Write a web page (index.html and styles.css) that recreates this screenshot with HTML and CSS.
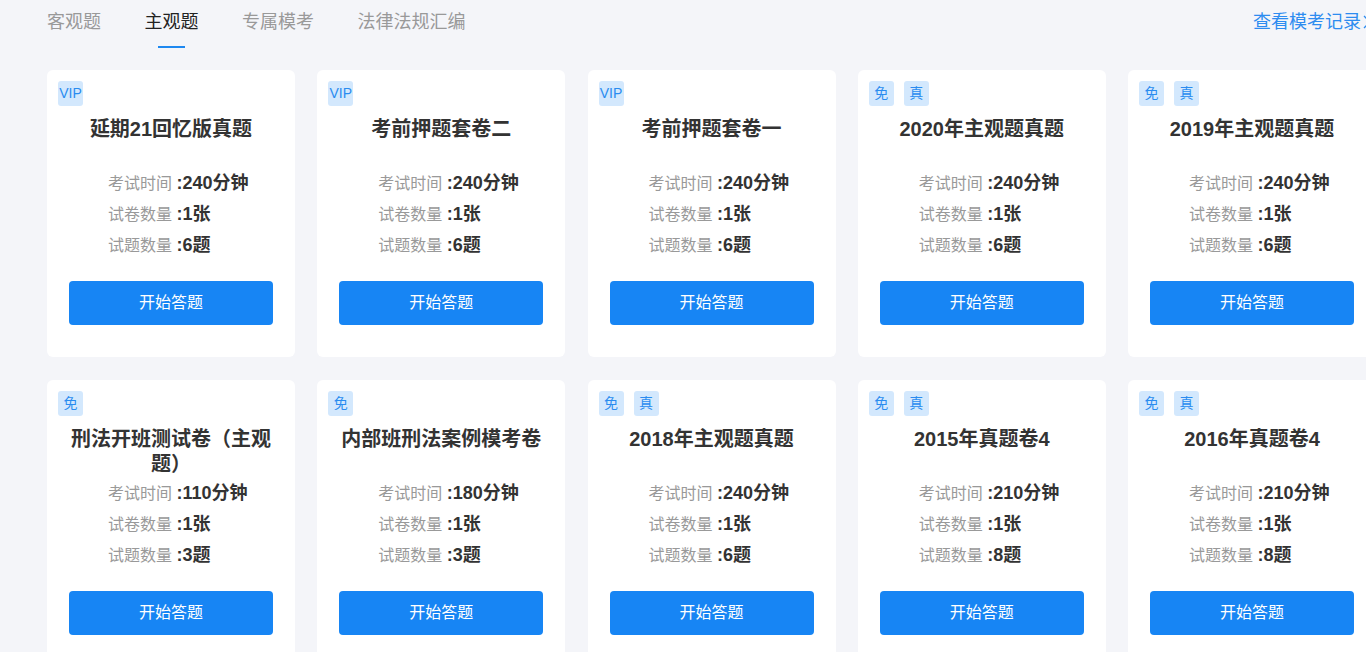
FILE: index.html
```html
<!DOCTYPE html>
<html lang="zh-CN">
<head>
    <meta charset="UTF-8">
    <meta name="viewport" content="width=device-width, initial-scale=1.0">
    <title>主观题模考</title>
    <link rel="stylesheet" href="styles.css">
</head>
<body>
    <div class="page">
        <!-- Tabs -->
        <div class="header">
            <div class="tabs">
                <div class="tab">客观题<span class="tab-line"></span></div>
                <div class="tab active">主观题<span class="tab-line"></span></div>
                <div class="tab">专属模考<span class="tab-line"></span></div>
                <div class="tab">法律法规汇编<span class="tab-line"></span></div>
            </div>
            <a class="record-link" href="#">查看模考记录<svg class="chevron" width="8" height="14" viewBox="0 0 8 14"><path d="M1 1 L7 7 L1 13" fill="none" stroke="currentColor" stroke-width="1.3"/></svg></a>
        </div>

        <!-- Exam cards -->
        <div class="card-grid">
            <div class="card">
                <div class="tags"><span class="tag">VIP</span></div>
                <div class="card-title">延期21回忆版真题</div>
                <div class="info">
                    <div class="info-row"><span class="label">考试时间</span> <b>:240分钟</b></div>
                    <div class="info-row"><span class="label">试卷数量</span> <b>:1张</b></div>
                    <div class="info-row"><span class="label">试题数量</span> <b>:6题</b></div>
                </div>
                <button class="start-btn">开始答题</button>
            </div>
            <div class="card">
                <div class="tags"><span class="tag">VIP</span></div>
                <div class="card-title">考前押题套卷二</div>
                <div class="info">
                    <div class="info-row"><span class="label">考试时间</span> <b>:240分钟</b></div>
                    <div class="info-row"><span class="label">试卷数量</span> <b>:1张</b></div>
                    <div class="info-row"><span class="label">试题数量</span> <b>:6题</b></div>
                </div>
                <button class="start-btn">开始答题</button>
            </div>
            <div class="card">
                <div class="tags"><span class="tag">VIP</span></div>
                <div class="card-title">考前押题套卷一</div>
                <div class="info">
                    <div class="info-row"><span class="label">考试时间</span> <b>:240分钟</b></div>
                    <div class="info-row"><span class="label">试卷数量</span> <b>:1张</b></div>
                    <div class="info-row"><span class="label">试题数量</span> <b>:6题</b></div>
                </div>
                <button class="start-btn">开始答题</button>
            </div>
            <div class="card">
                <div class="tags"><span class="tag">免</span><span class="tag">真</span></div>
                <div class="card-title">2020年主观题真题</div>
                <div class="info">
                    <div class="info-row"><span class="label">考试时间</span> <b>:240分钟</b></div>
                    <div class="info-row"><span class="label">试卷数量</span> <b>:1张</b></div>
                    <div class="info-row"><span class="label">试题数量</span> <b>:6题</b></div>
                </div>
                <button class="start-btn">开始答题</button>
            </div>
            <div class="card">
                <div class="tags"><span class="tag">免</span><span class="tag">真</span></div>
                <div class="card-title">2019年主观题真题</div>
                <div class="info">
                    <div class="info-row"><span class="label">考试时间</span> <b>:240分钟</b></div>
                    <div class="info-row"><span class="label">试卷数量</span> <b>:1张</b></div>
                    <div class="info-row"><span class="label">试题数量</span> <b>:6题</b></div>
                </div>
                <button class="start-btn">开始答题</button>
            </div>

            <div class="card">
                <div class="tags"><span class="tag">免</span></div>
                <div class="card-title">刑法开班测试卷（主观题）</div>
                <div class="info">
                    <div class="info-row"><span class="label">考试时间</span> <b>:110分钟</b></div>
                    <div class="info-row"><span class="label">试卷数量</span> <b>:1张</b></div>
                    <div class="info-row"><span class="label">试题数量</span> <b>:3题</b></div>
                </div>
                <button class="start-btn">开始答题</button>
            </div>
            <div class="card">
                <div class="tags"><span class="tag">免</span></div>
                <div class="card-title">内部班刑法案例模考卷</div>
                <div class="info">
                    <div class="info-row"><span class="label">考试时间</span> <b>:180分钟</b></div>
                    <div class="info-row"><span class="label">试卷数量</span> <b>:1张</b></div>
                    <div class="info-row"><span class="label">试题数量</span> <b>:3题</b></div>
                </div>
                <button class="start-btn">开始答题</button>
            </div>
            <div class="card">
                <div class="tags"><span class="tag">免</span><span class="tag">真</span></div>
                <div class="card-title">2018年主观题真题</div>
                <div class="info">
                    <div class="info-row"><span class="label">考试时间</span> <b>:240分钟</b></div>
                    <div class="info-row"><span class="label">试卷数量</span> <b>:1张</b></div>
                    <div class="info-row"><span class="label">试题数量</span> <b>:6题</b></div>
                </div>
                <button class="start-btn">开始答题</button>
            </div>
            <div class="card">
                <div class="tags"><span class="tag">免</span><span class="tag">真</span></div>
                <div class="card-title">2015年真题卷4</div>
                <div class="info">
                    <div class="info-row"><span class="label">考试时间</span> <b>:210分钟</b></div>
                    <div class="info-row"><span class="label">试卷数量</span> <b>:1张</b></div>
                    <div class="info-row"><span class="label">试题数量</span> <b>:8题</b></div>
                </div>
                <button class="start-btn">开始答题</button>
            </div>
            <div class="card">
                <div class="tags"><span class="tag">免</span><span class="tag">真</span></div>
                <div class="card-title">2016年真题卷4</div>
                <div class="info">
                    <div class="info-row"><span class="label">考试时间</span> <b>:210分钟</b></div>
                    <div class="info-row"><span class="label">试卷数量</span> <b>:1张</b></div>
                    <div class="info-row"><span class="label">试题数量</span> <b>:8题</b></div>
                </div>
                <button class="start-btn">开始答题</button>
            </div>
        </div>
    </div>
</body>
</html>
```

FILE: styles.css
```css
html, body { margin: 0; padding: 0; }
body {
    font-family: "Liberation Sans", "Noto Sans CJK SC", sans-serif;
    background-color: #f4f5f9;
    color: #333;
    overflow: hidden;
}

.page {
    width: 1328px;
    padding-left: 47px;
}

/* Tabs */
.header {
    display: flex;
    justify-content: space-between;
    align-items: flex-start;
    height: 48px;
    padding-right: 4px;
}

.tabs {
    display: flex;
    gap: 43.5px;
}

.tab {
    display: flex;
    flex-direction: column;
    align-items: center;
    padding-top: 10px;
    font-size: 18px;
    line-height: 24px;
    color: #999;
}

.tab-line {
    display: block;
    width: 27px;
    height: 2px;
    margin-top: 12px;
}

.tab.active { color: #222; }
.tab.active .tab-line { background-color: #1e88f0; }

.record-link {
    display: flex;
    align-items: center;
    padding-top: 10px;
    font-size: 18px;
    line-height: 24px;
    color: #2d8cf0;
    text-decoration: none;
}

.chevron { margin-left: 2px; }

/* Cards */
.card-grid {
    display: grid;
    grid-template-columns: repeat(5, 248px);
    column-gap: 22.25px;
    row-gap: 23px;
    margin-top: 22px;
}

.card {
    background-color: #fff;
    border-radius: 6px;
    height: 287px;
    box-sizing: border-box;
    padding-top: 11px;
    display: flex;
    flex-direction: column;
}

.tags {
    display: flex;
    gap: 10px;
    padding: 0 11px;
    height: 25px;
}

.tag {
    width: 25px;
    height: 25px;
    border-radius: 3px;
    background-color: #d3e8fd;
    color: #2a8cf0;
    font-size: 14px;
    line-height: 25px;
    text-align: center;
}

.card-title {
    margin-top: 11px;
    padding: 0 11px;
    height: 50px;
    font-size: 20px;
    line-height: 25px;
    font-weight: bold;
    text-align: center;
    color: #333;
}

.info {
    padding-top: 1px;
    padding-left: 61px;
}

.info-row {
    line-height: 31px;
    height: 31px;
}

.label {
    font-size: 16px;
    color: #999;
}

.info-row b {
    font-size: 18px;
    color: #333;
}

.start-btn {
    margin: 19.5px 22px 0;
    height: 44px;
    border: none;
    border-radius: 4px;
    background-color: #1785f4;
    color: #fff;
    font-family: inherit;
    font-size: 16px;
    line-height: 42px;
    cursor: pointer;
}
```
